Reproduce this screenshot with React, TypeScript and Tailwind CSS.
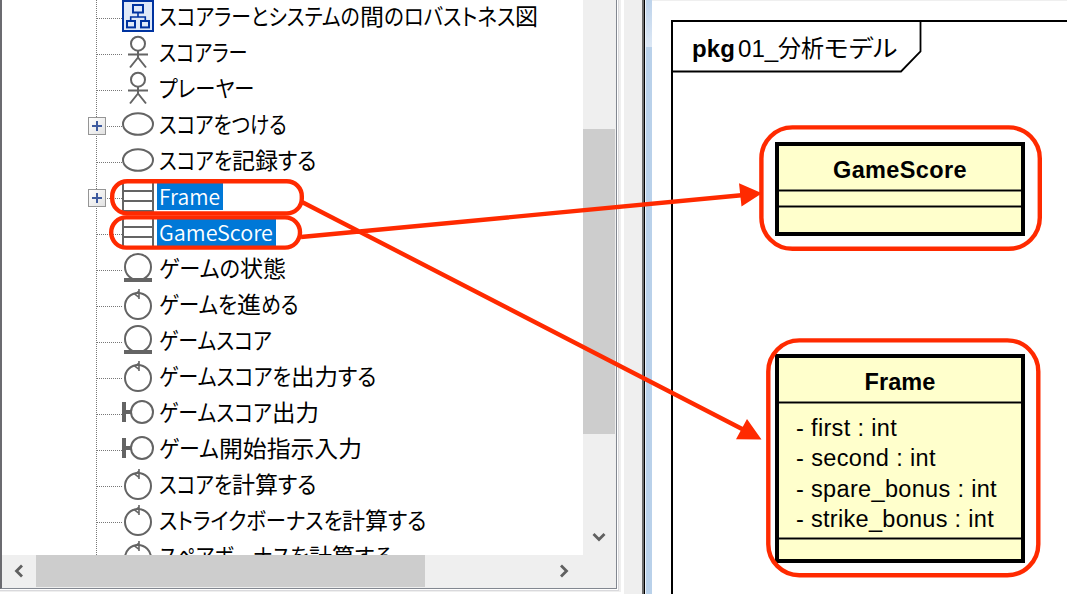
import { useLayoutEffect, useRef } from "react";

type Seg = [string, number];
type IconKind = "diagram" | "actor" | "usecase" | "class" | "entity" | "control" | "boundary";
type Row = { icon: IconKind; segs: Seg[]; expand?: boolean; selected?: boolean };

const rows: Row[] = [
  { icon: "diagram", segs: [["スコアラーとシステムの", 201], ["間", 24], ["のロバストネス", 131], ["図", 23]] },
  { icon: "actor", segs: [["スコアラー", 89]] },
  { icon: "actor", segs: [["プレーヤー", 95]] },
  { icon: "usecase", segs: [["スコアをつける", 128]], expand: true },
  { icon: "usecase", segs: [["スコアを", 73], ["記録", 46], ["する", 38]] },
  { icon: "class", segs: [["Frame", 61]], expand: true, selected: true },
  { icon: "class", segs: [["GameScore", 114]], selected: true },
  { icon: "entity", segs: [["ゲームの", 81], ["状態", 46]] },
  { icon: "control", segs: [["ゲームを", 78], ["進", 24], ["める", 38]] },
  { icon: "entity", segs: [["ゲームスコア", 113]] },
  { icon: "control", segs: [["ゲームスコアを", 132], ["出力", 47], ["する", 38]] },
  { icon: "boundary", segs: [["ゲームスコア", 113], ["出力", 47]] },
  { icon: "boundary", segs: [["ゲーム", 60], ["開始指示入力", 143]] },
  { icon: "control", segs: [["スコアを", 73], ["計算", 46], ["する", 38]] },
  { icon: "control", segs: [["ストライクボーナスを", 183], ["計算", 46], ["する", 38]] },
  { icon: "control", segs: [["スペアボーナスを", 150], ["計算", 46], ["する", 38]] },
];

/* Stretches a run of text horizontally so it fills the given width. */
function Fit({ text, width }: { text: string; width: number }) {
  const ref = useRef<HTMLSpanElement>(null);
  useLayoutEffect(() => {
    const el = ref.current;
    if (el) el.style.transform = `scaleX(${width / el.offsetWidth})`;
  }, [text, width]);
  return (
    <span className="inline-block shrink-0" style={{ width }}>
      <span ref={ref} className="inline-block origin-left whitespace-pre">{text}</span>
    </span>
  );
}

/* Spreads the letters of a label over the given width. */
function Spaced({ text, width }: { text: string; width: number }) {
  const ref = useRef<HTMLSpanElement>(null);
  useLayoutEffect(() => {
    const el = ref.current;
    if (!el) return;
    el.style.letterSpacing = "0px";
    const natural = el.getBoundingClientRect().width;
    el.style.letterSpacing = `${(width - natural) / text.length}px`;
  }, [text, width]);
  return <span ref={ref} className="inline-block whitespace-pre">{text}</span>;
}

function Icon({ kind }: { kind: IconKind }) {
  return (
    <svg width="32" height="36" viewBox="0 0 32 36" fill="none" stroke="#646464" strokeWidth="2" className="shrink-0">
      {kind === "diagram" && (
        <g stroke="#0033a0">
          <rect x="1" y="3" width="30" height="30" fill="#dfe9f8" />
          <path d="M16 15v4M8.7 23v-4h14.6v4" strokeWidth="1.6" />
          <rect x="11" y="7" width="10" height="7.5" />
          <rect x="5" y="23" width="8" height="6.4" />
          <rect x="19" y="23" width="8" height="6.4" />
        </g>
      )}
      {kind === "actor" && (
        <>
          <circle cx="16" cy="9.7" r="7" />
          <path d="M6 20.6h20M16 16.7v7.3M16 23.5l-8 10M16 23.5l8 10" />
        </>
      )}
      {kind === "usecase" && <ellipse cx="16" cy="18" rx="15" ry="10.8" />}
      {kind === "class" && <path d="M1 3h30v30H1zM1 13h30M1 23h30" />}
      {kind === "entity" && (
        <>
          <circle cx="16" cy="17" r="13" />
          <path d="M2 30h28" strokeWidth="4" />
        </>
      )}
      {kind === "control" && (
        <>
          <circle cx="16" cy="20" r="13" />
          <path d="M17 3v10M17 5l-4 3.3 4 3" strokeWidth="1.6" />
        </>
      )}
      {kind === "boundary" && (
        <>
          <circle cx="20" cy="18" r="11" />
          <path d="M2 8v20M2 18h7" strokeWidth="4" />
        </>
      )}
    </svg>
  );
}

function TreeRow({ row }: { row: Row }) {
  return (
    <div className="relative flex h-9 shrink-0 items-center">
      <div className="flex h-full w-[95px] shrink-0 justify-end">
        <div className="h-full w-px bg-[repeating-linear-gradient(to_bottom,#777_0px,#777_1px,#fff_1px,#fff_2px)]" />
      </div>
      <div className="mt-[5px] h-px w-[25px] shrink-0 bg-[repeating-linear-gradient(to_right,#777_0px,#777_1px,#fff_1px,#fff_2px)]" />
      {row.expand && (
        <div className="absolute left-[86px] top-[11px] flex h-[18px] w-[18px] items-center justify-center border border-[#959595] bg-gradient-to-br from-white to-[#e2e2e2]">
          <svg width="12" height="12" viewBox="0 0 12 12" className="shrink-0" stroke="#3d5a9e" strokeWidth="2"><path d="M1 6h10M6 1v10" /></svg>
        </div>
      )}
      <Icon kind={row.icon} />
      {row.selected ? (
        <div className="ml-[3px] flex h-7 items-center bg-[#0078d7] pl-[2px] pr-[3px] font-['Noto_Sans_CJK_JP',sans-serif] text-[21px] font-[350] leading-none text-white">
          <Fit text={row.segs[0][0]} width={row.segs[0][1]} />
        </div>
      ) : (
        <div className="mb-[2px] ml-[5px] flex font-['Noto_Sans_CJK_JP',sans-serif] text-[23px] leading-7 text-black [font-feature-settings:'palt']">
          {row.segs.map(([t, w], i) => <Fit key={i} text={t} width={w} />)}
        </div>
      )}
    </div>
  );
}

function Chevron({ d }: { d: string }) {
  return (
    <svg width="16" height="16" viewBox="0 0 16 16" fill="none" stroke="#606060" strokeWidth="2.8"><path d={d} /></svg>
  );
}

function Tree() {
  return (
    <div className="flex h-[589px] w-[617px] shrink-0 flex-col border-b border-l-2 border-r border-b-[#828790] border-l-[#6b6b70] border-r-[#828790] bg-[#efefef]">
      <div className="flex h-[555px] shrink-0">
        <div className="h-full w-[581px] shrink-0 overflow-hidden bg-white">
          <div className="-mt-[2px] flex flex-col">{rows.map((r, i) => <TreeRow key={i} row={r} />)}</div>
        </div>
        <div className="flex w-[32px] flex-col items-center justify-between">
          <div className="mt-[129px] h-[305px] w-full bg-[#cdcdcd]" />
          <div className="mb-[10px]"><Chevron d="M2.5 5l5.5 5.5L13.5 5" /></div>
        </div>
      </div>
      <div className="flex h-8 items-center">
        <div className="flex w-[34px] justify-center"><Chevron d="M11 2.5L5.5 8l5.5 5.5" /></div>
        <div className="h-full w-[389px] bg-[#cdcdcd]" />
        <div className="ml-[131px]"><Chevron d="M5 2.5L10.5 8L5 13.5" /></div>
      </div>
    </div>
  );
}

function Divider() {
  return <div className="h-[3px] shrink-0 border-y border-[#858570] bg-black" />;
}

const attributes: Seg[] = [
  ["- first : int", 101],
  ["- second : int", 140],
  ["- spare_bonus : int", 201],
  ["- strike_bonus : int", 198],
];

function Diagram() {
  return (
    <div className="relative h-full flex-1 overflow-hidden border-t border-[#efefef] bg-white font-['Liberation_Sans','Noto_Sans_CJK_JP',sans-serif] text-[23.5px] text-black">
      <div className="absolute left-[19px] top-[19px] h-[600px] w-[420px] border-l-2 border-t-2 border-black">
        <div className="relative flex h-[51px] w-[250px] items-center pl-[19px]">
          <svg width="250" height="52" viewBox="0 0 250 52" fill="none" stroke="black" strokeWidth="1.8" className="absolute left-0 top-0">
            <path d="M0 49.5H228L247.5 29.5V0" />
          </svg>
          <div className="mt-[3px] flex items-center leading-[30px]">
            <span className="w-[46px] text-[24px] font-bold"><Spaced text="pkg" width={43} /></span>
            <Fit text="01_" width={40} />
            <Fit text="分析" width={46} />
            <span className="[font-feature-settings:'palt']"><Fit text="モデル" width={73} /></span>
          </div>
        </div>
      </div>
      <div className="absolute left-[123px] top-[141px] flex h-[94px] w-[250px] flex-col border-4 border-black bg-[#ffffcc]">
        <div className="flex h-[43px] items-center justify-center pt-[6px] font-bold leading-none"><Spaced text="GameScore" width={134} /></div>
        <Divider />
        <div className="h-[13px]" />
        <Divider />
      </div>
      <div className="absolute left-[123px] top-[353px] flex h-[209px] w-[250px] flex-col border-4 border-black bg-[#ffffcc]">
        <div className="flex h-[43px] items-center justify-center pt-[6px] font-bold leading-none"><Spaced text="Frame" width={71} /></div>
        <Divider />
        <div className="flex h-[133px] flex-col pl-[17px] pt-[9px]">
          {attributes.map(([t, w]) => (
            <div key={t} className="h-[30.3px] leading-[30px]"><Spaced text={t} width={w} /></div>
          ))}
        </div>
        <Divider />
      </div>
    </div>
  );
}

function Annotations() {
  return (
    <svg width="1067" height="594" viewBox="0 0 1067 594" className="pointer-events-none absolute left-0 top-0" fill="none" stroke="#ff2a00" strokeWidth="4.4">
      <rect x="112.2" y="181.2" width="189.6" height="32.2" rx="15" />
      <rect x="111.2" y="217.4" width="188.8" height="30.2" rx="15" />
      <rect x="761.4" y="127.4" width="278.4" height="121.4" rx="31" />
      <rect x="768.3" y="340.4" width="270" height="234.8" rx="31" />
      <path d="M302 202L746 431M301 237L744 195" />
      <path d="M761.5 439.5L747 419L736 439.2zM762 193.2L739 183.2L741.5 206.5z" fill="#ff2a00" stroke="none" />
    </svg>
  );
}

export default function App() {
  return (
    <div className="relative flex h-[594px] w-[1067px] overflow-hidden bg-white">
      <div className="h-[592px] w-[621px] shrink-0 border-b border-[#efefef] bg-[#efefef]">
        <div className="h-[591px] w-[619px] border-b border-r border-[#d9d9dc] bg-white"><Tree /></div>
      </div>
      <div className="ml-[3px] w-[18px] shrink-0 bg-[#efefef]" />
      <div className="w-[2px] shrink-0 bg-[#6b6b6b]" />
      <div className="w-px shrink-0 bg-black" />
      <div className="w-px shrink-0 bg-[#edf3fa]" />
      <div className="w-[6px] shrink-0 bg-[#b9d1ea]"><div className="h-[47px] bg-gradient-to-b from-[#bdd3eb] to-[#dde8f5]" /></div>
      <Diagram />
      <Annotations />
    </div>
  );
}
